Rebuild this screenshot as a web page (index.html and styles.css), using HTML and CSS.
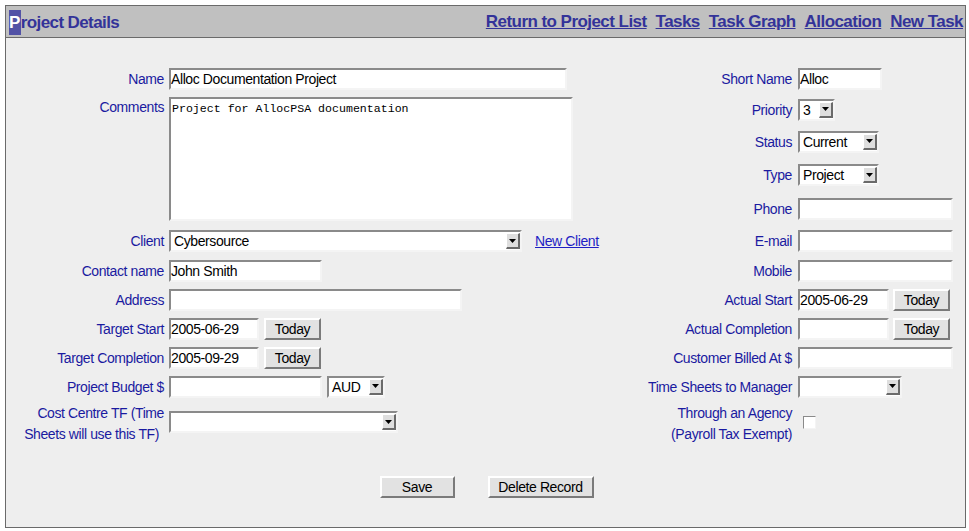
FILE: index.html
```html
<!DOCTYPE html>
<html>
<head>
<meta charset="utf-8">
<title>Project Details</title>
<link rel="stylesheet" href="styles.css">
</head>
<body>
<div class="page">
  <div class="header">
    <div class="title"><span class="hl">P</span>roject Details</div>
    <nav class="links">
      <a href="#">Return to Project List</a>
      <a href="#">Tasks</a>
      <a href="#">Task Graph</a>
      <a href="#">Allocation</a>
      <a href="#">New Task</a>
    </nav>
  </div>
  <div class="content">
    <div class="form">
      <div class="l1">Name</div>
      <div class="f1"><input class="in w-name" type="text" value="Alloc Documentation Project"></div>
      <div class="l2">Short Name</div>
      <div class="f2"><input class="in w-short" type="text" value="Alloc"></div>

      <div class="l1 comments-label">Comments</div>
      <div class="f1 comments-field"><textarea class="ta">Project for AllocPSA documentation</textarea></div>
      <div class="l2">Priority</div>
      <div class="f2"><div class="sel w-prio"><span class="val">3</span><span class="btn"><svg width="8" height="6" viewBox="0 0 8 6"><polygon points="0,1 7,1 3.5,5" fill="#000"/></svg></span></div></div>

      <div class="l2">Status</div>
      <div class="f2"><div class="sel w-status"><span class="val">Current</span><span class="btn"><svg width="8" height="6" viewBox="0 0 8 6"><polygon points="0,1 7,1 3.5,5" fill="#000"/></svg></span></div></div>

      <div class="l2">Type</div>
      <div class="f2"><div class="sel w-status"><span class="val">Project</span><span class="btn"><svg width="8" height="6" viewBox="0 0 8 6"><polygon points="0,1 7,1 3.5,5" fill="#000"/></svg></span></div></div>

      <div class="l2">Phone</div>
      <div class="f2"><input class="in w-long" type="text" value=""></div>

      <div class="l1">Client</div>
      <div class="f1"><div class="sel w-client"><span class="val">Cybersource</span><span class="btn"><svg width="8" height="6" viewBox="0 0 8 6"><polygon points="0,1 7,1 3.5,5" fill="#000"/></svg></span></div><a class="newclient" href="#">New Client</a></div>
      <div class="l2">E-mail</div>
      <div class="f2"><input class="in w-long" type="text" value=""></div>

      <div class="l1">Contact name</div>
      <div class="f1"><input class="in w-contact" type="text" value="John Smith"></div>
      <div class="l2">Mobile</div>
      <div class="f2"><input class="in w-long" type="text" value=""></div>

      <div class="l1">Address</div>
      <div class="f1"><input class="in w-addr" type="text" value=""></div>
      <div class="l2">Actual Start</div>
      <div class="f2"><input class="in w-date2" type="text" value="2005-06-29"><button class="pb today2">Today</button></div>

      <div class="l1">Target Start</div>
      <div class="f1"><input class="in w-date" type="text" value="2005-06-29"><button class="pb today">Today</button></div>
      <div class="l2">Actual Completion</div>
      <div class="f2"><input class="in w-date2" type="text" value=""><button class="pb today2">Today</button></div>

      <div class="l1">Target Completion</div>
      <div class="f1"><input class="in w-date" type="text" value="2005-09-29"><button class="pb today">Today</button></div>
      <div class="l2">Customer Billed At $</div>
      <div class="f2"><input class="in w-long" type="text" value=""></div>

      <div class="l1">Project Budget $</div>
      <div class="f1"><input class="in w-contact" type="text" value=""><div class="sel w-aud"><span class="val">AUD</span><span class="btn"><svg width="8" height="6" viewBox="0 0 8 6"><polygon points="0,1 7,1 3.5,5" fill="#000"/></svg></span></div></div>
      <div class="l2">Time Sheets to Manager</div>
      <div class="f2"><div class="sel w-tsm"><span class="val"></span><span class="btn"><svg width="8" height="6" viewBox="0 0 8 6"><polygon points="0,1 7,1 3.5,5" fill="#000"/></svg></span></div></div>

      <div class="l1 two">Cost Centre TF (Time<br><span class="second">Sheets will use this TF)</span></div>
      <div class="f1 top"><div class="sel w-cc"><span class="val"></span><span class="btn"><svg width="8" height="6" viewBox="0 0 8 6"><polygon points="0,1 7,1 3.5,5" fill="#000"/></svg></span></div></div>
      <div class="l2 two">Through an Agency<br>(Payroll Tax Exempt)</div>
      <div class="f2 top"><span class="cb"></span></div>
    </div>
    <div class="actions">
      <button class="pb save">Save</button>
      <button class="pb del">Delete Record</button>
    </div>
  </div>
</div>
</body>
</html>
```

FILE: styles.css
```css
html, body {
  background: #ffffff;
}
body {
  margin: 5px 3px 3px 5px;
  font-family: "Liberation Sans", Arial, sans-serif;
}
.page {
  width: 961px;
  height: 523px;
  box-sizing: border-box;
  border: 1px solid #6a6a6a;
  background: #eeeeee;
  display: flex;
  flex-direction: column;
}
.header {
  height: 32px;
  box-sizing: border-box;
  background: #c0c0c0;
  border-bottom: 1px solid #6a6a6a;
  display: flex;
  align-items: center;
  justify-content: space-between;
  padding: 1px 2px 0 3px;
  font-weight: bold;
  font-size: 17px;
  letter-spacing: -0.6px;
  color: #333399;
}
.title {
  line-height: 25px;
}
.hl {
  display: inline-block;
  background: #5252a6;
  color: #ffffff;
  padding: 0 1px 0 0;
  line-height: 25px;
}
.links {
  display: flex;
  gap: 9px;
  letter-spacing: -0.55px;
}
.links a {
  color: #333399;
  text-decoration: underline;
}
.content {
  padding-top: 26px;
  display: flex;
  flex-direction: column;
}
.form {
  display: grid;
  grid-template-columns: 158px 456px 172px 172px;
  grid-template-rows: 30px 31px 33px 34px 34px 30px 29px 29px 29px 29px 29px 46px;
  font-size: 14px;
  letter-spacing: -0.4px;
}
.l1, .l2 {
  color: #1a1aa0;
  text-align: right;
  align-self: center;
  white-space: nowrap;
}
.l1 { grid-column: 1; }
.f1 { grid-column: 2; padding-left: 5px; }
.l2 { grid-column: 3; }
.f2 { grid-column: 4; padding-left: 6px; }
.f1, .f2 {
  display: flex;
  align-items: center;
}
.comments-label {
  grid-row: span 4;
  align-self: start;
  padding-top: 5px;
  line-height: 16px;
}
.comments-field {
  grid-row: span 4;
  align-items: flex-start;
  padding-top: 3px;
}
.two {
  line-height: 21px;
}
.second {
  margin-right: 5px;
}
.top {
  align-items: flex-start;
}
.f1.top { padding-top: 10px; }
.f2.top { padding-top: 15px; }

.in {
  box-sizing: border-box;
  height: 22px;
  margin: 0;
  padding: 0 1px 0 0;
  border-style: solid;
  border-width: 2px;
  border-color: #8a8a8a #f4f4f4 #f4f4f4 #8a8a8a;
  background: #ffffff;
  font-family: "Liberation Sans", Arial, sans-serif;
  font-size: 14px;
  letter-spacing: -0.4px;
  color: #000;
  outline: none;
}
.w-name { width: 398px; }
.w-short { width: 84px; }
.w-long { width: 155px; }
.w-contact { width: 153px; }
.w-addr { width: 293px; }
.w-date { width: 90px; }
.w-date2 { width: 91px; }

.ta {
  box-sizing: border-box;
  width: 404px;
  height: 124px;
  margin: 0;
  padding: 3px 1px;
  border-style: solid;
  border-width: 2px;
  border-color: #8a8a8a #f4f4f4 #f4f4f4 #8a8a8a;
  background: #ffffff;
  font-family: "Liberation Mono", "Courier New", monospace;
  font-size: 11.6px;
  line-height: 13px;
  color: #000;
  resize: none;
  outline: none;
}

.sel {
  box-sizing: border-box;
  height: 22px;
  border-style: solid;
  border-width: 2px;
  border-color: #8a8a8a #f4f4f4 #f4f4f4 #8a8a8a;
  background: #ffffff;
  display: flex;
  align-items: center;
  justify-content: space-between;
  color: #000;
}
.sel .val {
  padding-left: 3px;
  white-space: nowrap;
}
.sel .btn {
  box-sizing: border-box;
  width: 14px;
  height: 16px;
  margin-right: 0;
  border-style: solid;
  border-width: 1px 2px 2px 1px;
  border-color: #ffffff #6a6a6a #6a6a6a #ffffff;
  background: #dedede;
  display: flex;
  align-items: center;
  justify-content: center;
}
.w-client { width: 353px; }
.w-prio { width: 37px; }
.w-status { width: 81px; }
.w-aud { width: 58px; margin-left: 5px; }
.w-cc { width: 229px; }
.w-tsm { width: 104px; }

.newclient {
  margin-left: 13px;
  color: #1f1fc4;
  text-decoration: underline;
}

.pb {
  box-sizing: border-box;
  height: 22px;
  margin: 0;
  padding: 0;
  border-style: solid;
  border-width: 2px;
  border-color: #ffffff #7a7a7a #7a7a7a #ffffff;
  background: #e2e2e2;
  font-family: "Liberation Sans", Arial, sans-serif;
  font-size: 14px;
  letter-spacing: -0.4px;
  color: #000;
}
.today { width: 57px; margin-left: 5px; }
.today2 { width: 57px; margin-left: 4px; }

.cb {
  display: block;
  box-sizing: border-box;
  width: 13px;
  height: 13px;
  margin-left: 5px;
  border-style: solid;
  border-width: 1px;
  border-color: #8a8a8a #f4f4f4 #f4f4f4 #8a8a8a;
  background: #ffffff;
}

.actions {
  margin-top: 29px;
  padding-left: 2px;
  display: flex;
  justify-content: center;
  gap: 33px;
}
.save { width: 75px; }
.del { width: 106px; }
```
